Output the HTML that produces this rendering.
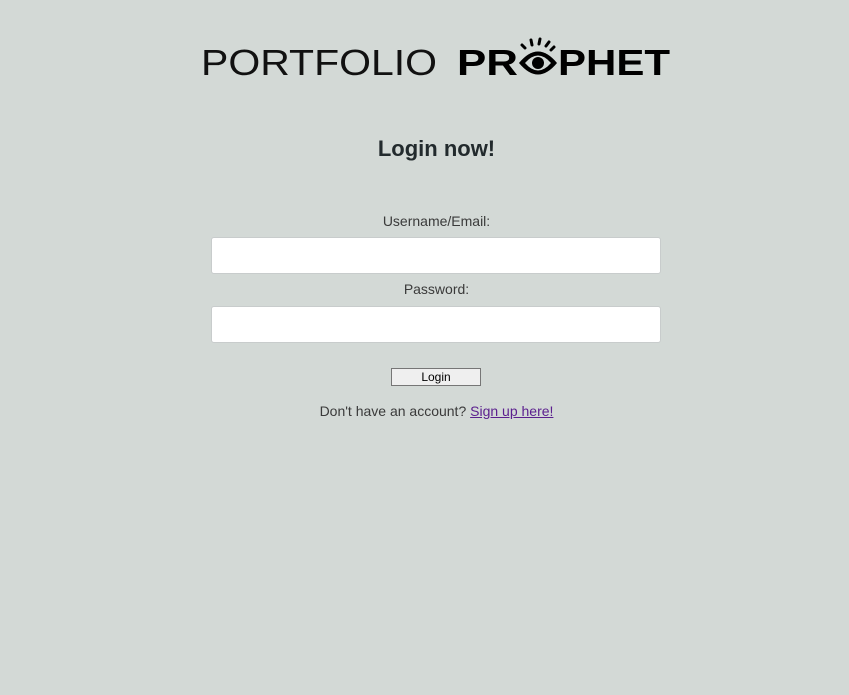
<!DOCTYPE html>
<html><head><style>
html,body{margin:0;padding:0;background:#d3d9d6;width:849px;height:695px;overflow:hidden;font-family:"Liberation Sans",sans-serif;}
.abs{position:absolute}
h1{position:absolute;left:0;width:873px;top:136px;margin:0;text-align:center;font-size:22px;font-weight:bold;color:#222a2d}
.lbl{position:absolute;left:0;width:873px;text-align:center;font-size:14px;color:#3a3a3a}
.inp{position:absolute;left:211px;width:448px;height:35px;background:#fff;border:1px solid #c8cccc;border-radius:3px}
.btn{position:absolute;left:391px;top:368px;width:88px;height:16px;background:#efefef;border:1px solid #767676;font-size:12px;text-align:center;line-height:16px;color:#000}
.su{position:absolute;left:0;width:873px;top:403px;text-align:center;font-size:14px;color:#3a3a3a}
.su a{color:#5b1f8e;text-decoration:underline}
</style></head><body>
<svg class="abs" style="left:0;top:0" width="849" height="100">
<text x="201" y="75" font-family="Liberation Sans" font-size="36" textLength="236" lengthAdjust="spacingAndGlyphs" fill="#111">PORTFOLIO</text>
<text x="457" y="75" font-family="Liberation Sans" font-size="36" font-weight="bold" textLength="61" lengthAdjust="spacingAndGlyphs" fill="#000">PR</text>
<text x="558" y="75" font-family="Liberation Sans" font-size="36" font-weight="bold" textLength="112" lengthAdjust="spacingAndGlyphs" fill="#000">PHET</text>
<path d="M519 63 Q538 40 557 63 Q538 86 519 63 Z" fill="#000"/>
<path d="M525 63 Q538 48 551 63 Q538 78 525 63 Z" fill="#d3d9d6"/>
<circle cx="538" cy="63" r="6" fill="#000"/>
<g stroke="#000" stroke-width="3" stroke-linecap="round">
<line x1="525" y1="48" x2="522" y2="45"/><line x1="532" y1="45" x2="531" y2="40"/><line x1="539" y1="44" x2="540" y2="39"/><line x1="546" y1="46" x2="549" y2="42"/><line x1="551" y1="50" x2="554" y2="47"/>
</g>
</svg>
<h1>Login now!</h1>
<div class="lbl" style="top:213px">Username/Email:</div>
<div class="inp" style="top:237px"></div>
<div class="lbl" style="top:281px">Password:</div>
<div class="inp" style="top:306px"></div>
<div class="btn">Login</div>
<div class="su">Don't have an account? <a>Sign up here!</a></div>
</body></html>
